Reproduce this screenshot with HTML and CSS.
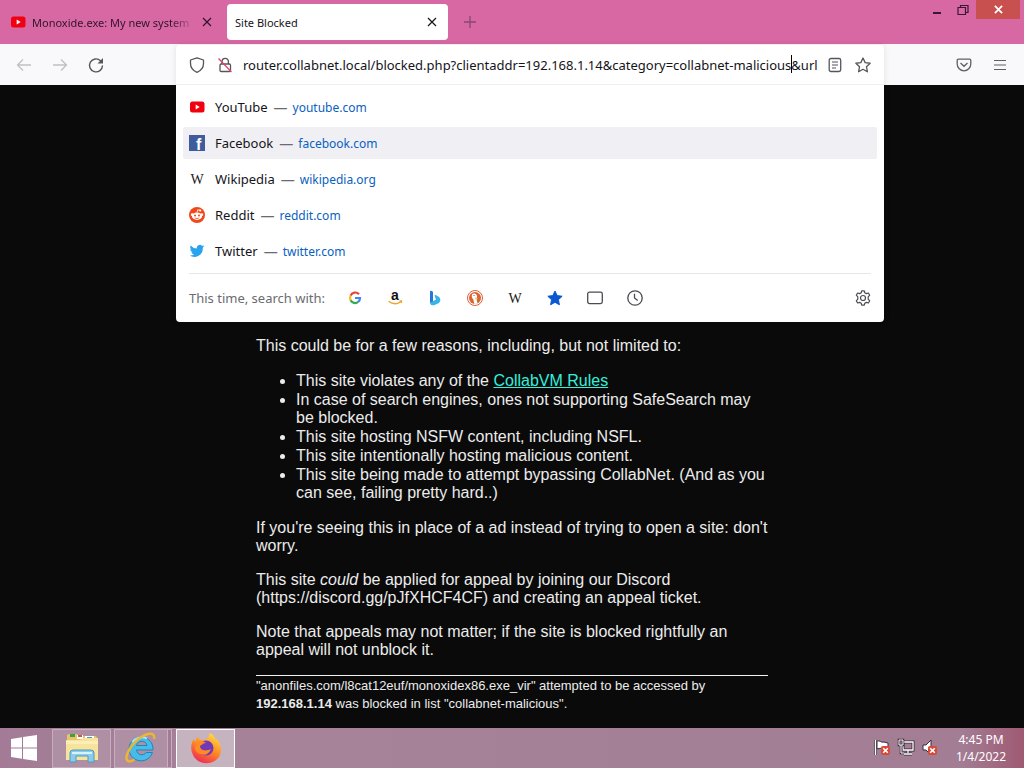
FILE: index.html
```html
<!DOCTYPE html>
<html lang="en">
<head>
<meta charset="utf-8">
<meta name="viewport" content="width=device-width, initial-scale=1">
<title>Site Blocked</title>
<link rel="stylesheet" href="styles.css">
</head>
<body>
<svg class="defs" aria-hidden="true">
  <symbol id="youtube" viewBox="0 0 16 16"><rect x="1" y="2.500" width="14.500" height="11" rx="2.500" fill="#f10010"/><path d="M6.700 5.500v5l4-2.500z" fill="#fff"/></symbol>
  <symbol id="close" viewBox="0 0 10 10"><path d="M1 1l8 8M9 1L1 9" fill="none" stroke="currentColor" stroke-width="1.200"/></symbol>
  <symbol id="errorbadge" viewBox="0 0 9 9"><rect width="9" height="9" rx="2" fill="#d64b38"/><path d="M2.200 2.200l4.600 4.600M6.800 2.200L2.200 6.800" stroke="#fff" stroke-width="1.600"/></symbol>
</svg>

<header class="titlebar">
  <div class="tabs" role="tablist">
    <div class="tab">
      <svg class="icon16"><use href="#youtube"/></svg>
      <span class="tab-label faded" role="tab">Monoxide.exe: My new system</span>
      <button class="tab-close" aria-label="Close Monoxide tab"><svg class="icon10"><use href="#close"/></svg></button>
    </div>
    <div class="tab active">
      <span class="tab-label" role="tab" aria-selected="true">Site Blocked</span>
      <button class="tab-close" aria-label="Close Site Blocked tab"><svg class="icon10"><use href="#close"/></svg></button>
    </div>
    <button class="new-tab" aria-label="New tab"><svg width="14" height="14" viewBox="0 0 14 14"><path d="M7 1v12M1 7h12" stroke="#8a4575" stroke-width="1.300"/></svg></button>
  </div>
  <div class="window-controls">
    <button class="win" aria-label="Minimize"><svg width="12" height="12" viewBox="0 0 12 12"><path d="M2 9h8" stroke="#391834" stroke-width="2"/></svg></button>
    <button class="win" aria-label="Restore"><svg width="12" height="12" viewBox="0 0 12 12"><path d="M1 3.500h7.500v7H1zM3.500 3.500v-2H11v7H8.500" fill="none" stroke="#391834" stroke-width="1.200"/></svg></button>
    <button class="win win-close" aria-label="Close"><svg width="9" height="9" viewBox="0 0 10 10"><path d="M1 1l8 8M9 1L1 9" stroke="#fff" stroke-width="1.900"/></svg></button>
  </div>
</header>

<div class="toolbar">
  <nav class="nav-buttons" aria-label="Navigation">
    <button disabled aria-label="Back"><svg class="icon16" viewBox="0 0 16 16"><path d="M15 8H1.500M7 2.500L1.500 8 7 13.500" fill="none" stroke="#c0c0c4" stroke-width="1.300"/></svg></button>
    <button disabled aria-label="Forward"><svg class="icon16" viewBox="0 0 16 16"><path d="M1 8h13.500M9 2.500L14.500 8 9 13.500" fill="none" stroke="#c0c0c4" stroke-width="1.300"/></svg></button>
    <button aria-label="Reload"><svg class="icon16" viewBox="0 0 16 16"><path d="M14.500 8.500A6.500 6.500 0 1 1 12.500 3.700L14 5.200" fill="none" stroke="#55555c" stroke-width="1.400"/><path d="M15 1v5.500H9.500z" fill="#55555c"/></svg></button>
  </nav>

  <div class="urlbar">
    <div class="panel">
      <form class="address">
        <svg class="icon16" viewBox="0 0 16 16"><path d="M8 .8L14.500 3v3.500c0 4-2.300 7-6.500 8.800C3.800 13.500 1.500 10.500 1.500 6.500V3z" fill="none" stroke="#55555c" stroke-width="1.300" stroke-linejoin="round"/></svg>
        <svg class="lock icon16" viewBox="0 0 16 16"><path d="M5 7V4.500a3.200 3.200 0 0 1 6.400 0V7" fill="none" stroke="#55555c" stroke-width="1.300"/><rect x="3" y="7" width="10.500" height="7.500" rx="1.200" fill="none" stroke="#55555c" stroke-width="1.300"/><path d="M1.500 1.500l13 13.500" stroke="#db4869" stroke-width="1.300"/></svg>
        <label class="field">
          <input type="text" aria-label="Address" value="router.collabnet.local/blocked.php?clientaddr=192.168.1.14&amp;category=collabnet-malicious&amp;url">
          <span class="caret"></span>
        </label>
        <button type="button" aria-label="Reader view"><svg class="icon16" viewBox="0 0 16 16"><rect x="2.200" y="1.500" width="11.500" height="13" rx="1.800" fill="none" stroke="#55555c" stroke-width="1.300"/><path d="M5 5h6M5 8h6M5 11h4" stroke="#55555c" stroke-width="1.200"/></svg></button>
        <button type="button" aria-label="Bookmark"><svg class="icon16" viewBox="0 0 16 16"><path d="M8 1l2.150 4.600 5 .650-3.700 3.450.95 5.050L8 12.300l-4.400 2.450.95-5.050L.85 6.250l5-.65z" fill="none" stroke="#55555c" stroke-width="1.300" stroke-linejoin="round"/></svg></button>
      </form>

      <div class="results">
        <a class="result" href="#"><svg class="icon16"><use href="#youtube"/></svg><span class="name">YouTube</span><span class="dash">—</span><span class="site">youtube.com</span></a>
        <a class="result selected" href="#"><svg class="icon16" viewBox="0 0 16 16"><rect width="16" height="16" fill="#3f5c9d"/><text x="7" y="15" class="logo-f">f</text></svg><span class="name">Facebook</span><span class="dash">—</span><span class="site">facebook.com</span></a>
        <a class="result" href="#"><svg class="icon16" viewBox="0 0 16 16"><text x="8" y="13" class="logo-w">W</text></svg><span class="name">Wikipedia</span><span class="dash">—</span><span class="site">wikipedia.org</span></a>
        <a class="result" href="#"><svg class="icon16" viewBox="0 0 16 16"><circle cx="8" cy="8" r="8" fill="#f1481b"/><path d="M8 5.500l.7-2.700 2.300.5" fill="none" stroke="#fff" stroke-width=".8"/><circle cx="11.200" cy="3.500" r="1.100" fill="#fff"/><circle cx="3.200" cy="7.700" r="1.400" fill="#fff"/><circle cx="12.800" cy="7.700" r="1.400" fill="#fff"/><ellipse cx="8" cy="9.200" rx="5" ry="3.700" fill="#fff"/><circle cx="6" cy="8.500" r="1" fill="#f1481b"/><circle cx="10" cy="8.500" r="1" fill="#f1481b"/><path d="M5.800 10.800c1.300 1 3.100 1 4.400 0" fill="none" stroke="#f1481b" stroke-width=".8"/></svg><span class="name">Reddit</span><span class="dash">—</span><span class="site">reddit.com</span></a>
        <a class="result" href="#"><svg class="icon16" viewBox="0 0 24 24"><path d="M23 5a9 9 0 0 1-2.600.7 4.500 4.500 0 0 0 2-2.500 9 9 0 0 1-2.900 1.100 4.500 4.500 0 0 0-7.700 4.100A12.800 12.800 0 0 1 2.500 3.700a4.500 4.500 0 0 0 1.400 6 4.500 4.500 0 0 1-2-.6 4.500 4.500 0 0 0 3.600 4.500 4.500 4.500 0 0 1-2 .1 4.500 4.500 0 0 0 4.200 3.100A9 9 0 0 1 1 18.700 12.800 12.800 0 0 0 20.700 7.300 9 9 0 0 0 23 5z" fill="#2aa3ef"/></svg><span class="name">Twitter</span><span class="dash">—</span><span class="site">twitter.com</span></a>
      </div>

      <div class="engines">
        <span class="engines-label">This time, search with:</span>
        <button aria-label="Google"><svg class="icon16" viewBox="0 0 16 16"><g fill="none" stroke-width="2.200"><path d="M12 4.200A5 5 0 0 0 3.600 5.700" stroke="#e94335"/><path d="M3.600 5.700a5 5 0 0 0 0 4.600" stroke="#f9bc15"/><path d="M3.600 10.300a5 5 0 0 0 7.600 1.600" stroke="#34a853"/><path d="M8 8h5a5 5 0 0 1-1.800 3.900" stroke="#4285f4"/></g></svg></button>
        <button aria-label="Amazon"><svg class="icon16" viewBox="0 0 16 16"><text x="8" y="10" class="logo-a">a</text><path d="M1.500 11.300c4 3 8.500 3 12 .7M12.500 11h2v2" fill="none" stroke="#efa22c" stroke-width="1.300"/></svg></button>
        <button aria-label="Bing"><svg class="icon16" viewBox="0 0 16 16"><path d="M3 1.500q0-1 1-.7l1.300.5q.7.300.7 1V12l-3 1z" fill="#2678d8"/><path d="M7.500 5.500q0-.8 1-.4l2.500 1.200c3 1.500 3.200 5.200.5 6.900L7 15.200c-2 .6-3.600-.4-4-2.200l6-3.500z" fill="#35b5e8"/></svg></button>
        <button aria-label="DuckDuckGo"><svg class="icon16" viewBox="0 0 16 16"><circle cx="8" cy="8" r="7.500" fill="#fff" stroke="#d9603b"/><circle cx="8" cy="8" r="6" fill="#de6035"/><path d="M5 4.500c1-1.700 4-1.400 4.700.6.800 2-.1 3.500.1 5.200l.8 3.200-3.200.5L6.200 9C4.800 8.300 4.500 6 5 4.500z" fill="#fff"/><path d="M8 7.500l3.500.5-2.800 1.200z" fill="#f7bd27"/><circle cx="7" cy="5.500" r=".6" fill="#35506f"/><path d="M9.500 10l2.500 1-.8 1.500z" fill="#58a846"/></svg></button>
        <button aria-label="Wikipedia"><svg class="icon16" viewBox="0 0 16 16"><text x="8" y="13" class="logo-w">W</text></svg></button>
        <button aria-label="Bookmarks"><svg class="icon16" viewBox="0 0 16 16"><path d="M8 1l2.150 4.600 5 .650-3.700 3.450.95 5.050L8 12.300l-4.400 2.450.95-5.050L.85 6.250l5-.65z" fill="#0a57d2" stroke="#0a57d2" stroke-linejoin="round"/></svg></button>
        <button aria-label="Tabs"><svg class="icon16" viewBox="0 0 16 16"><rect x=".7" y="2.200" width="14.600" height="11.400" rx="1.800" fill="none" stroke="#4b4b52" stroke-width="1.300"/></svg></button>
        <button aria-label="History"><svg class="icon16" viewBox="0 0 16 16"><circle cx="8" cy="8" r="7.200" fill="none" stroke="#4b4b52" stroke-width="1.300"/><path d="M7.500 3.800V8l3.200 2.600" fill="none" stroke="#4b4b52" stroke-width="1.300"/></svg></button>
        <button class="settings" aria-label="Search settings"><svg class="icon16" viewBox="0 0 16 16"><path d="M6.700.8h2.600l.5 2 1.500.8 2.100-.6 1.300 2.200-1.500 1.600v2.400l1.500 1.600-1.300 2.200-2.100-.6-1.500.8-.5 2H6.700l-.5-2-1.500-.8-2.100.6-1.300-2.200 1.500-1.600V6.800L1.300 5.200 2.600 3l2.100.6 1.500-.8z" fill="none" stroke="#4b4b52" stroke-width="1.200" stroke-linejoin="round"/><circle cx="8" cy="8" r="2.500" fill="none" stroke="#4b4b52" stroke-width="1.200"/></svg></button>
      </div>
    </div>
  </div>

  <div class="right-buttons">
    <button aria-label="Pocket"><svg class="icon16" viewBox="0 0 16 16"><path d="M2.500 2.200h11c.8 0 1.300.5 1.300 1.300V7a6.800 6.800 0 0 1-13.600 0V3.500c0-.8.500-1.300 1.300-1.300zM4.500 6L8 9.300 11.500 6" fill="none" stroke="#5f5f66" stroke-width="1.300"/></svg></button>
    <button aria-label="Menu"><svg class="icon16" viewBox="0 0 16 16"><path d="M2 3.500h12M2 8h12M2 12.500h12" stroke="#5f5f66" stroke-width="1.200"/></svg></button>
  </div>
</div>

<main class="page">
  <article class="message">
    <p>This could be for a few reasons, including, but not limited to:</p>
    <ul>
      <li>This site violates any of the <a href="#">CollabVM Rules</a></li>
      <li>In case of search engines, ones not supporting SafeSearch may be blocked.</li>
      <li>This site hosting NSFW content, including NSFL.</li>
      <li>This site intentionally hosting malicious content.</li>
      <li>This site being made to attempt bypassing CollabNet. (And as you can see, failing pretty hard..)</li>
    </ul>
    <p>If you're seeing this in place of a ad instead of trying to open a site: don't worry.</p>
    <p>This site <em>could</em> be applied for appeal by joining our Discord (https://discord.gg/pJfXHCF4CF) and creating an appeal ticket.</p>
    <p>Note that appeals may not matter; if the site is blocked rightfully an appeal will not unblock it.</p>
    <footer>"anonfiles.com/l8cat12euf/monoxidex86.exe_vir" attempted to be accessed by <b>192.168.1.14</b> was blocked in list "collabnet-malicious".</footer>
  </article>
</main>

<footer class="taskbar">
  <button class="start" aria-label="Start"><svg width="28" height="28" viewBox="0 0 28 28"><path d="M1 5l11-1.700v10.200H1zM13 3.100L27 1v12.500H13zM1 14.500h11v10.200L1 23zM13 14.500h14V27l-14-2.100z" fill="#fff"/></svg></button>
  <button class="task" aria-label="File Explorer"><svg width="34" height="34" viewBox="0 0 34 34"><path d="M2 5c0-1 .5-2 2-2h8l2 2h16c1 0 2 1 2 2v21H2z" fill="#e5c66a"/><path d="M5 3h5v3H5z" fill="#3ba045"/><path d="M12 4h6v4h-6z" fill="#fff"/><path d="M13 4h4v2h-4z" fill="#d4573b"/><path d="M20 5h9v4h-9z" fill="#fff"/><path d="M22 6h5v2h-5z" fill="#4799cf"/><path d="M1 9h14l4-2h14v22H1z" fill="#f8e39b"/><path d="M1 13h32v-3H1z" fill="#fcedb9"/><path d="M5 31V22q0-3 3-3h18q3 0 3 3v9h-6v-6H11v6z" fill="#8ecbe8" stroke="#459dc6"/><path d="M7 22h20" stroke="#d7f2fa" stroke-width="2"/></svg></button>
  <button class="task stacked" aria-label="Internet Explorer"><svg width="34" height="34" viewBox="0 0 34 34"><path d="M29 19H12.500c.5 5 7 6.500 9.500 2.500h6.500A12 12 0 1 1 29 19zM12.500 14.500h10.500c-.7-5.500-9.500-5.700-10.500 0z" fill="#45bce9" fill-rule="evenodd" stroke="#2284be"/><path d="M8.500 11.500C10.500 7 18 4.500 23 7.500" fill="none" stroke="#a9e6f8" stroke-width="2"/><path d="M30 8c1.500-7-6-6.500-13.500-1.500C6 14 0 26.500 3.500 29.500c1.500 1.500 4 1 7-1" fill="none" stroke="#edb72d" stroke-width="2.500"/></svg></button>
  <button class="task current" aria-label="Firefox"><svg width="34" height="34" viewBox="0 0 34 34"><defs><linearGradient id="flame" x1=".8" y1="0" x2=".3" y2="1"><stop offset="0" stop-color="#ffe24a"/><stop offset=".5" stop-color="#ff8b24"/><stop offset="1" stop-color="#ee2858"/></linearGradient></defs><path d="M21 2c4 2 5 5 6 7l1-1c4 5 5 11 3 16-5 11-22 11-27 0C1 18 2 12 5 8l1 3 2-5 4 3c3 0 6-1 7-2 1-2 1-3 2-5z" fill="url(#flame)"/><circle cx="17" cy="17" r="7.500" fill="#7139b5"/><path d="M8 11c4-2 7-1 9 1-3 0-4 2-6 3 0 4 5 6 11 3-2 5-6 7-10 5-6-1-8-7-4-12z" fill="#ff8b24"/></svg></button>
  <div class="tray">
    <svg width="16" height="18" viewBox="0 0 16 18"><path d="M1.500 1v15" stroke="#382b3b" stroke-width="3"/><path d="M1.500 1v15" stroke="#fff" stroke-width="1.500"/><path d="M3 2c3-1 4 2 7 1l4 1v6c-3 1-5-2-11 0z" fill="#fff" stroke="#382b3b"/><use href="#errorbadge" x="7" y="7" width="9" height="9"/></svg>
    <svg width="16" height="18" viewBox="0 0 16 18"><path d="M5 3h10v8H5zM10 11v3M6 15h8" fill="none" stroke="#382b3b" stroke-width="3"/><path d="M5 3h10v8H5zM10 11v3M6 15h8" fill="none" stroke="#fff" stroke-width="1.300"/><path d="M1 1h4v5H1zM3 6v8h3" fill="#a27d94" stroke="#382b3b" stroke-width="2.500"/><path d="M1 1h4v5H1zM3 6v8h3" fill="none" stroke="#fff"/></svg>
    <svg width="16" height="18" viewBox="0 0 16 18"><path d="M1 6h3l5-5v15l-5-5H1z" fill="#fff" stroke="#382b3b"/><use href="#errorbadge" x="6" y="7" width="9" height="9"/></svg>
  </div>
  <div class="clock"><span>4:45 PM</span><span>1/4/2022</span></div>
</footer>
</body>
</html>
```
FILE: styles.css
```css
* { box-sizing: border-box; }
body {
  margin: 0;
  min-height: 100vh;
  display: flex;
  flex-direction: column;
  background: #0a0a0a;
  font-family: "Noto Sans", "Open Sans", sans-serif;
  font-size: 12px;
}
button {
  display: flex;
  align-items: center;
  justify-content: center;
  padding: 0;
  border: 0;
  background: none;
  font: inherit;
  color: inherit;
}
svg { display: block; flex: none; overflow: visible; }
.defs { position: absolute; width: 0; height: 0; }
.icon16 { width: 16px; height: 16px; }
.icon10 { width: 10px; height: 10px; }

.titlebar {
  display: flex;
  justify-content: space-between;
  height: 44px;
  background: #d768a3;
}
.tabs { display: flex; align-items: center; padding-left: 2px; }
.tab {
  display: flex;
  align-items: center;
  gap: 6px;
  width: 221px;
  height: 36px;
  padding: 0 10px 0 8px;
  margin-right: 4px;
  border-radius: 4px;
  font-size: 11px;
  color: #30142b;
}
.tab.active { background: #fff; color: #15141a; }
.tab-label { flex: 1; overflow: hidden; white-space: nowrap; }
.faded { mask-image: linear-gradient(to right, #000 85%, transparent); }
.tab-close { width: 12px; height: 20px; }
.new-tab { width: 36px; height: 36px; }
.window-controls { display: flex; padding-right: 4px; }
.win { width: 26px; height: 19px; }
.win-close { width: 44px; background: #c8504f; }

.toolbar {
  display: flex;
  height: 41px;
  background: #f9f9fb;
}
.nav-buttons { display: flex; align-items: center; width: 176px; padding-left: 6px; }
.nav-buttons button { width: 36px; height: 32px; }
.urlbar { position: relative; flex: 1; }
.right-buttons { display: flex; align-items: center; justify-content: flex-end; width: 140px; padding-right: 6px; }
.right-buttons button { width: 36px; height: 32px; }
.panel {
  position: absolute;
  top: 1px;
  left: 0;
  right: 0;
  z-index: 2;
  border-radius: 4px;
  background: #fff;
  box-shadow: 0 0 6px rgba(0, 0, 0, .1);
}
.address {
  display: flex;
  align-items: center;
  height: 40px;
  padding: 0 13px;
  border-bottom: 1px solid #f0f0f2;
}
.lock { margin: 0 10px 0 12px; }
.field { position: relative; flex: 1; display: flex; }
.field input {
  width: 100%;
  padding: 0;
  border: 0;
  outline: 0;
  background: none;
  font: inherit;
  font-size: 13px;
  line-height: 22px;
  color: #15141a;
}
.caret { position: absolute; top: 1px; left: 548px; width: 1px; height: 18px; background: #000; }
.address button { width: 16px; height: 24px; margin-left: 12px; }
.field + button { margin-left: 4px; }

.results { display: flex; flex-direction: column; gap: 4px; padding: 6px 7px; }
.result {
  display: flex;
  align-items: center;
  height: 32px;
  padding: 0 7px;
  border-radius: 2px;
  text-decoration: none;
}
.selected { background: #f0f0f4; }
.name { margin-left: 10px; font-size: 13px; color: #15141a; }
.result .icon16 { margin-left: -1px; }
.dash { margin: 0 5px 0 6px; font-size: 14px; color: #6a6a70; }
.site { color: #0a5fc0; }
.engines {
  display: flex;
  align-items: center;
  height: 49px;
  margin: 0 13px;
  border-top: 1px solid #e6e6ea;
}
.engines button { width: 40px; height: 32px; }
.engines-label { width: 146px; font-size: 13px; color: #6b6b70; white-space: nowrap; }
.engines .settings { width: 16px; margin-left: auto; }
.logo-f { font: bold 16px "Liberation Sans", sans-serif; fill: #fff; }
.logo-w { font: 14px "Liberation Serif", serif; fill: #202020; text-anchor: middle; }
.logo-a { font: bold 14px "Liberation Sans", sans-serif; fill: #111; text-anchor: middle; }

.page {
  flex: 1;
  padding: 252px 25% 12px;
  font-family: "Liberation Sans", Arial, sans-serif;
  font-size: 16px;
  line-height: 18px;
  color: #ececec;
}
.message p { margin: 0 0 16px; }
.message ul { display: flex; flex-direction: column; gap: 1px; margin: 17px 0; padding-left: 40px; }
.message a { color: #33f0dc; }
.message footer { padding-top: 1px; border-top: 1px solid #f2f2f2; font-size: 13px; }

.taskbar {
  display: flex;
  align-items: center;
  height: 40px;
  background: linear-gradient(to right, #a37b96, #a68398 30%, #a27d94 94%, #9f5972);
}
.start { width: 48px; height: 40px; }
.task {
  width: 59px;
  height: 39px;
  margin-left: 3px;
  border: 1px solid #c8adbe;
  background: #ae8fa3;
}
.start + .task { margin-left: 4px; }
.stacked { width: 54px; margin-right: 5px; box-shadow: 4px 0 0 -1px #a37b96, 4px 0 0 0 #c8adbe; }
.current { border-color: #fff; background: #c6b3c0; }
.tray { display: flex; gap: 8px; margin-left: auto; }
.clock {
  display: flex;
  flex-direction: column;
  align-items: center;
  width: 86px;
  line-height: 17px;
  color: #fff;
}
```
